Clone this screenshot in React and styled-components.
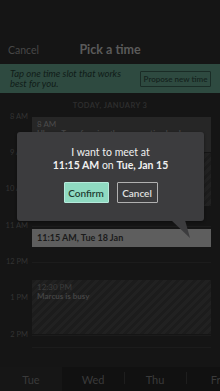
import React from 'react'
import styled, { createGlobalStyle } from 'styled-components'

const HOUR = 36.5
const SLOT = HOUR / 12 // 5 minute rows

const GlobalStyle = createGlobalStyle`
  html, body {
    margin: 0;
    padding: 0;
    background: #151515;
  }
  * {
    box-sizing: border-box;
  }
`

// row index (1-based) for a time given in minutes after 8 AM
const row = minutes => Math.round(minutes / 5) + 1

const hours = [
  { label: '8 AM', at: 0 },
  { label: '9 AM', at: 60 },
  { label: '10 AM', at: 120 },
  { label: '11 AM', at: 180 },
  { label: '12 PM', at: 240 },
  { label: '1 PM', at: 300 },
  { label: '2 PM', at: 360 }
]

const days = ['Tue', 'Wed', 'Thu', 'Fri']

export default function App() {
  return (
    <Screen>
      <GlobalStyle />
      <StatusSpace />
      <Header>
        <HeaderAction>Cancel</HeaderAction>
        <Title>Pick a time</Title>
        <span />
      </Header>
      <Banner>
        <BannerText>Tap one time slot that works best for you.</BannerText>
        <OutlineButton>Propose new time</OutlineButton>
      </Banner>
      <DateRow>TODAY, JANUARY 3</DateRow>
      <Timeline>
        <DayGrid>
          {hours.map(h => (
            <React.Fragment key={h.label}>
              <HourLabel style={{ gridRow: row(h.at) }}>{h.label}</HourLabel>
              <HourLine style={{ gridRow: row(h.at) }} />
            </React.Fragment>
          ))}
          <Event style={{ gridRow: `${row(0)} / ${row(60)}` }}>
            <EventTime>8 AM</EventTime>
            <EventTitle>Uber - Transforming the commuting landscape</EventTitle>
          </Event>
          <Busy style={{ gridRow: `${row(60)} / ${row(150)}` }} />
          <Selected style={{ gridRow: `${row(185)} / ${row(215)}` }}>
            11:15 AM, Tue 18 Jan
          </Selected>
          <Busy style={{ gridRow: `${row(270)} / ${row(360)}` }}>
            <EventTime>12:30 PM</EventTime>
            <EventTitle>Marcus is busy</EventTitle>
          </Busy>
          <EndLine style={{ gridRow: row(380) }} />
        </DayGrid>
      </Timeline>
      <TabBar>
        {days.map((d, i) => (
          <Tab key={d} $active={i === 0} $divider={i > 1}>{d}</Tab>
        ))}
      </TabBar>

      <Popup>
        <PopupLine>I want to meet at</PopupLine>
        <PopupLine>
          <b>11:15 AM</b> on <b>Tue, Jan 15</b>
        </PopupLine>
        <PopupActions>
          <ConfirmButton>Confirm</ConfirmButton>
          <CancelButton>Cancel</CancelButton>
        </PopupActions>
      </Popup>
      <Tail width="22" height="20" viewBox="0 0 22 20">
        <polygon points="0,0 14,0 19,18" fill="#3c3c3e" />
      </Tail>
    </Screen>
  )
}

const Screen = styled.div`
  position: relative;
  width: 220px;
  height: 391px;
  overflow: hidden;
  display: flex;
  flex-direction: column;
  background: #151515;
  font-family: Lato, "Open Sans", sans-serif;
`

const StatusSpace = styled.div`
  height: 40px;
  flex-shrink: 0;
`

const Header = styled.div`
  height: 24px;
  flex-shrink: 0;
  display: grid;
  grid-template-columns: 1fr auto 1fr;
  align-items: center;
  padding: 0 8px 5px;
`

const HeaderAction = styled.span`
  font-size: 10.5px;
  color: #474747;
`

const Title = styled.span`
  font-size: 12.5px;
  font-weight: 700;
  color: #5a5a5a;
`

const Banner = styled.div`
  height: 29px;
  flex-shrink: 0;
  display: flex;
  align-items: center;
  justify-content: space-between;
  padding: 0 9px 0 10px;
  background: #2e4a40;
`

const BannerText = styled.p`
  margin: 0;
  width: 122px;
  font-size: 9.5px;
  line-height: 10px;
  font-style: italic;
  color: #101c18;
`

const OutlineButton = styled.button`
  width: 71px;
  height: 16px;
  padding: 0;
  border: 1px solid #1a2c26;
  border-radius: 1px;
  background: transparent;
  white-space: nowrap;
  font-family: inherit;
  font-size: 8px;
  font-weight: 600;
  color: #14221d;
`

const DateRow = styled.div`
  height: 19px;
  flex-shrink: 0;
  padding-top: 8px;
  text-align: center;
  font-size: 7.5px;
  font-weight: 700;
  letter-spacing: 0.4px;
  color: #2d2d2d;
`

const Timeline = styled.div`
  flex: 1;
  padding: 4.5px 9px 0 0;
`

const DayGrid = styled.div`
  display: grid;
  grid-template-columns: 32px 1fr;
  grid-template-rows: repeat(78, ${SLOT}px);
`

const HourLabel = styled.div`
  grid-column: 1;
  align-self: start;
  transform: translateY(-50%);
  padding-right: 4px;
  text-align: right;
  font-size: 7.5px;
  line-height: 10px;
  color: #333;
`

const HourLine = styled.div`
  grid-column: 2;
  align-self: start;
  border-top: 1px solid #1c1c1c;
`

const EndLine = styled(HourLine)``

const Event = styled.div`
  grid-column: 2;
  margin-bottom: 1px;
  padding: 3px 5px;
  overflow: hidden;
  background: #262626;
`

const EventTime = styled.div`
  font-size: 8px;
  line-height: 9px;
  color: #4c4c4c;
`

const EventTitle = styled.div`
  font-size: 8px;
  line-height: 9px;
  font-weight: 700;
  white-space: nowrap;
  color: #464646;
`

const Busy = styled(Event)`
  background: repeating-linear-gradient(135deg, #1c1c1c 0 3px, #212121 3px 6px);

  ${EventTime} {
    color: #3c3c3c;
  }
  ${EventTitle} {
    color: #444;
  }
`

const Selected = styled.div`
  grid-column: 2;
  display: flex;
  align-items: center;
  padding: 0 5px;
  background: #5e5e5e;
  font-size: 9px;
  font-weight: 700;
  color: #1b1b1b;
`

const TabBar = styled.div`
  height: 24px;
  flex-shrink: 0;
  display: flex;
  background: #111;
`

const Tab = styled.div`
  position: relative;
  width: 62px;
  flex-shrink: 0;
  display: flex;
  align-items: center;
  justify-content: center;
  font-size: 11px;
  color: #3a3a3a;
  background: ${p => (p.$active ? '#161616' : 'transparent')};

  &::before {
    content: '';
    display: ${p => (p.$divider ? 'block' : 'none')};
    position: absolute;
    left: 0;
    top: 5px;
    height: 12px;
    border-left: 1px solid #1e1e1e;
  }
`

const Popup = styled.div`
  position: absolute;
  left: 17px;
  top: 132px;
  width: 187px;
  height: 89px;
  padding-top: 14px;
  display: flex;
  flex-direction: column;
  align-items: center;
  border-radius: 3px;
  background: #3c3c3e;
  box-shadow: 0 1px 3px rgba(0, 0, 0, 0.4);
`

const PopupLine = styled.div`
  font-size: 10.5px;
  line-height: 13px;
  color: #f0f0f0;

  b {
    font-weight: 700;
  }
`

const PopupActions = styled.div`
  display: flex;
  gap: 8px;
  margin-top: 10px;
`

const ConfirmButton = styled.button`
  width: 45px;
  height: 21px;
  padding: 0;
  border: 1px solid #b5eadb;
  border-radius: 1px;
  background: #8fdac1;
  font-family: inherit;
  font-size: 10px;
  font-weight: 600;
  color: #1e3b31;
`

const CancelButton = styled(ConfirmButton)`
  width: 41px;
  border-color: #b0b0b0;
  background: transparent;
  color: #e0e0e0;
`

const Tail = styled.svg`
  position: absolute;
  left: 171px;
  top: 220px;
`
